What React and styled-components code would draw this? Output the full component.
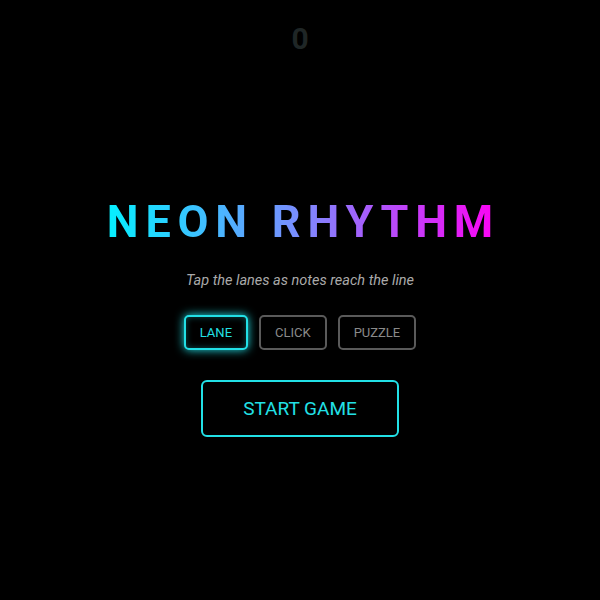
import React, { useState } from "react";
import styled, { createGlobalStyle } from "styled-components";

const GlobalStyle = createGlobalStyle`
  * {
    box-sizing: border-box;
  }

  html, body {
    margin: 0;
    background: #000;
    font-family: Roboto, "Noto Sans", Arial, sans-serif;
    -webkit-font-smoothing: antialiased;
  }
`;

const neon = {
  cyan: "#22e0e6",
  magenta: "#ff10f0",
  idle: "#5a5a5a",
  idleText: "#8a8a8a"
};

const Screen = styled.div`
  position: relative;
  width: 100%;
  height: 600px;
  background: #000;
  display: flex;
  flex-direction: column;
  align-items: center;
  padding-top: 199px;
`;

const Score = styled.div`
  position: absolute;
  top: 21px;
  left: 0;
  right: 0;
  text-align: center;
  font-size: 30px;
  font-weight: 700;
  color: #1f2626;
`;

const Title = styled.h1`
  margin: 0;
  font-size: 45px;
  font-weight: 700;
  letter-spacing: 6.8px;
  line-height: 45px;
  padding-left: 6.8px;
  background: linear-gradient(90deg, #00f4ff 0%, #7b8cff 50%, #ff00f4 100%);
  -webkit-background-clip: text;
  background-clip: text;
  color: transparent;
`;

const Subtitle = styled.p`
  margin: 28px 0 0;
  font-size: 14.5px;
  font-style: italic;
  color: #aaaaaa;
`;

const Modes = styled.div`
  display: flex;
  gap: 11px;
  margin-top: 26px;
`;

const ModeButton = styled.button`
  height: 35px;
  padding: 0 14px;
  background: #000;
  border: 2px solid ${p => (p.active ? neon.cyan : neon.idle)};
  border-radius: 5px;
  color: ${p => (p.active ? neon.cyan : neon.idleText)};
  font-family: inherit;
  font-size: 13px;
  box-shadow: ${p =>
    p.active ? `0 0 10px ${neon.cyan}, inset 0 0 6px rgba(34,224,230,0.35)` : "none"};
  cursor: pointer;
`;

const StartButton = styled.button`
  margin-top: 30px;
  width: 198px;
  height: 57px;
  background: #000;
  border: 2px solid ${neon.cyan};
  border-radius: 6px;
  color: ${neon.cyan};
  font-family: inherit;
  font-size: 19px;
  cursor: pointer;
`;

const modes = ["LANE", "CLICK", "PUZZLE"];

export default function App() {
  const [mode, setMode] = useState("LANE");

  return (
    <>
      <GlobalStyle />
      <Screen>
        <Score>0</Score>
        <Title>NEON RHYTHM</Title>
        <Subtitle>Tap the lanes as notes reach the line</Subtitle>
        <Modes>
          {modes.map(m => (
            <ModeButton key={m} active={m === mode} onClick={() => setMode(m)}>
              {m}
            </ModeButton>
          ))}
        </Modes>
        <StartButton>START GAME</StartButton>
      </Screen>
    </>
  );
}
